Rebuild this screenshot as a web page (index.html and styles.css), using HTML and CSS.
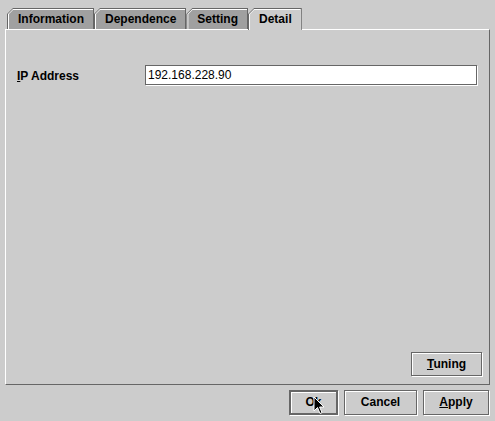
FILE: index.html
```html
<!DOCTYPE html>
<html>
<head>
<meta charset="utf-8">
<link rel="stylesheet" href="styles.css">
</head>
<body>
<div class="window">
  <div class="tabs">
    <div class="tab"><div class="tab-hl"><div class="tab-fill">Information</div></div></div>
    <div class="tab"><div class="tab-hl"><div class="tab-fill">Dependence</div></div></div>
    <div class="tab"><div class="tab-hl"><div class="tab-fill">Setting</div></div></div>
    <div class="tab tab-selected"><div class="tab-hl"><div class="tab-fill">Detail</div></div></div>
  </div>
  <div class="panel">
    <div class="field-row">
      <label class="label"><u>I</u>P Address</label>
      <div class="field">192.168.228.90</div>
    </div>
    <div class="btn btn-tuning"><u>T</u>uning</div>
  </div>
  <div class="actions">
    <div class="btn btn-default btn-ok">Ok</div>
    <div class="btn btn-cancel">Cancel</div>
    <div class="btn btn-apply"><u>A</u>pply</div>
  </div>
  <svg class="cursor" width="14" height="20" viewBox="0 0 14 20">
    <path d="M1 1 L1 15 L4.5 11.5 L7 17.5 L9 16.6 L6.6 11 L11 11 Z" fill="#000" stroke="#fff" stroke-width="1"/>
  </svg>
</div>
</body>
</html>
```

FILE: styles.css
```css
* { box-sizing: border-box; }

body {
  margin: 0;
  background: #cccccc;
  font-family: "Liberation Sans", Arial, sans-serif;
  font-size: 12px;
  font-weight: bold;
  color: #000;
}

.window {
  position: relative;
  width: 495px;
  height: 421px;
  padding: 8px 5px 0 5px;
  display: flex;
  flex-direction: column;
}

.tabs {
  display: flex;
  align-items: flex-start;
  height: 21px;
  padding-left: 2px;
}

.tab {
  height: 21px;
  background: #666666;
  padding: 1px 1px 0 1px;
  clip-path: polygon(6px 0, 100% 0, 100% 100%, 0 100%, 0 6px);
}

.tab-hl {
  height: 100%;
  background: #ffffff;
  padding: 1px 0 0 1px;
  clip-path: polygon(5px 0, 100% 0, 100% 100%, 0 100%, 0 5px);
}

.tab-fill {
  height: 100%;
  background: #a0a0a0;
  padding: 0 9px;
  line-height: 19px;
  white-space: nowrap;
  clip-path: polygon(4px 0, 100% 0, 100% 100%, 0 100%, 0 4px);
}

.tab-selected {
  height: 22px;
  position: relative;
  z-index: 1;
}

.tab-selected .tab-fill {
  background: #cccccc;
}

.panel {
  width: 485px;
  height: 356px;
  border-top: 1px solid #ffffff;
  border-left: 1px solid #ffffff;
  border-right: 1px solid #666666;
  border-bottom: 1px solid #666666;
  padding: 35px 7px 8px 11px;
  display: flex;
  flex-direction: column;
}

.field-row {
  display: flex;
  align-items: center;
  height: 20px;
}

.label {
  width: 128px;
  padding-top: 2px;
}

.field {
  width: 332px;
  height: 20px;
  border: 1px solid #666666;
  box-shadow: 1px 1px 0 #ffffff;
  background: #ffffff;
  font-weight: normal;
  line-height: 18px;
  padding-left: 2px;
}

.btn {
  border: 1px solid #666666;
  box-shadow: inset 1px 1px 0 #ffffff, 1px 1px 0 #ffffff;
  background: #cccccc;
  text-align: center;
  white-space: nowrap;
}

.btn-tuning {
  margin-top: auto;
  align-self: flex-end;
  width: 71px;
  height: 24px;
  line-height: 22px;
}

.actions {
  display: flex;
  justify-content: flex-end;
  gap: 6px;
  margin-top: 5px;
  padding-right: 1px;
}

.actions .btn {
  height: 25px;
  line-height: 23px;
}

.btn-default {
  border-width: 2px;
}

.actions .btn-default {
  line-height: 21px;
}

.btn-ok { width: 49px; }
.btn-cancel { width: 73px; }
.btn-apply { width: 66px; }

.cursor {
  position: absolute;
  left: 313px;
  top: 396px;
}
```
